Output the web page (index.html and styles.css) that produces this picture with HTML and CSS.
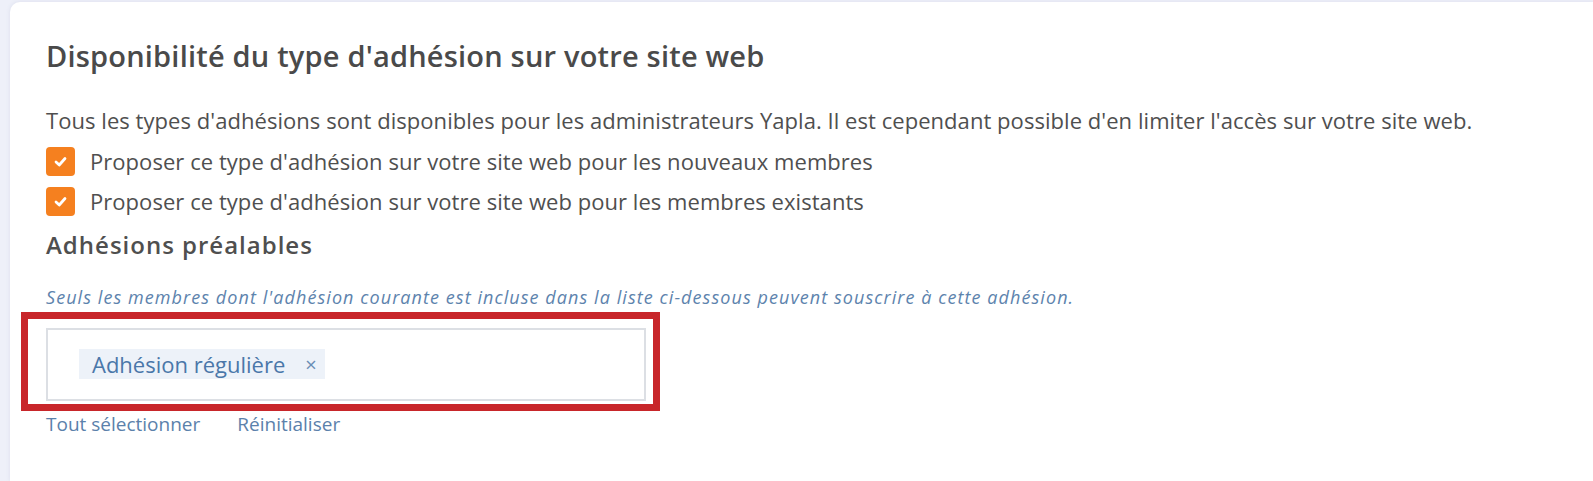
FILE: index.html
```html
<!DOCTYPE html>
<html lang="fr">
<head>
  <meta charset="UTF-8">
  <meta name="viewport" content="width=device-width, initial-scale=1.0">
  <title>Disponibilité du type d'adhésion</title>
  <link rel="stylesheet" href="styles.css">
</head>
<body>

  <!-- Card -->
  <div class="card">
    <h2 class="card-title">Disponibilité du type d'adhésion sur votre site web</h2>

    <p class="intro">Tous les types d'adhésions sont disponibles pour les administrateurs Yapla. Il est cependant possible d'en limiter l'accès sur votre site web.</p>

    <label class="check-row">
      <span class="checkbox">
        <svg viewBox="0 0 12 12" width="15" height="15"><path d="M2.4 6.4 L5 8.8 L9.6 3.6" fill="none" stroke="#fff" stroke-width="2.2" stroke-linecap="round" stroke-linejoin="round"/></svg>
      </span>
      Proposer ce type d'adhésion sur votre site web pour les nouveaux membres
    </label>
    <label class="check-row">
      <span class="checkbox">
        <svg viewBox="0 0 12 12" width="15" height="15"><path d="M2.4 6.4 L5 8.8 L9.6 3.6" fill="none" stroke="#fff" stroke-width="2.2" stroke-linecap="round" stroke-linejoin="round"/></svg>
      </span>
      Proposer ce type d'adhésion sur votre site web pour les membres existants
    </label>

    <h3 class="sub-title">Adhésions préalables</h3>
    <p class="help">Seuls les membres dont l'adhésion courante est incluse dans la liste ci-dessous peuvent souscrire à cette adhésion.</p>

    <div class="select-wrap">
      <div class="multi-select">
        <span class="tag">Adhésion régulière <span class="tag-remove">×</span></span>
      </div>
      <!-- annotation box -->
      <div class="highlight"></div>
    </div>

    <div class="select-actions">
      <a href="#">Tout sélectionner</a>
      <a href="#">Réinitialiser</a>
    </div>
  </div>

</body>
</html>
```

FILE: styles.css
```css
/* Page */
body {
  margin: 0;
  padding: 2px 0 0 10px;
  background: #eef0f9;
  font-family: 'Open Sans', 'Lato', sans-serif;
  color: #4f4f4f;
  height: 479px;
  overflow: hidden;
}

/* Card */
.card {
  background: #fff;
  border-radius: 10px 0 0 0;
  box-shadow: 0 0 4px rgba(120, 130, 170, 0.15);
  padding: 38px 0 0 36px;
  height: 100%;
  box-sizing: border-box;
}

.card-title {
  margin: 0 0 35px;
  font-size: 29px;
  font-weight: 600;
  line-height: 32px;
  letter-spacing: 0.2px;
  color: #4a4a4a;
}

.intro {
  margin: 0 0 8px;
  font-size: 22px;
  line-height: 26px;
  letter-spacing: 0.05px;
}

/* Checkbox rows */
.check-row {
  display: flex;
  align-items: center;
  gap: 15px;
  height: 40px;
  font-size: 22px;
  letter-spacing: 0.05px;
}

.checkbox {
  width: 29px;
  height: 29px;
  border-radius: 4px;
  background: #f5801f;
  display: flex;
  align-items: center;
  justify-content: center;
  flex-shrink: 0;
}

.sub-title {
  margin: 10px 0 0;
  font-size: 24px;
  font-weight: 600;
  line-height: 28px;
  letter-spacing: 1px;
  color: #4f4f4f;
}

.help {
  margin: 28px 0 0;
  font-size: 18px;
  font-style: italic;
  line-height: 20px;
  letter-spacing: 1.07px;
  color: #5d83ad;
}

/* Multi-select */
.select-wrap {
  position: relative;
  width: 600px;
  margin-top: 21px;
}

.multi-select {
  height: 73px;
  box-sizing: border-box;
  border: 2px solid #dcdfe4;
  padding: 19px 0 0 31px;
}

.tag {
  display: inline-flex;
  align-items: center;
  height: 30px;
  padding: 0 8px 0 13px;
  background: #edf2f9;
  color: #4a77a9;
  font-size: 22px;
}

.tag-remove {
  margin-left: 20px;
  font-size: 20px;
  color: #6a8db5;
}

.highlight {
  position: absolute;
  top: -16px;
  left: -25px;
  right: -14px;
  bottom: -10px;
  border: 7px solid #c8262a;
  pointer-events: none;
}

.select-actions {
  display: flex;
  gap: 37px;
  margin-top: 10px;
}

.select-actions a {
  font-size: 19px;
  color: #5b81ab;
  text-decoration: none;
}
```
